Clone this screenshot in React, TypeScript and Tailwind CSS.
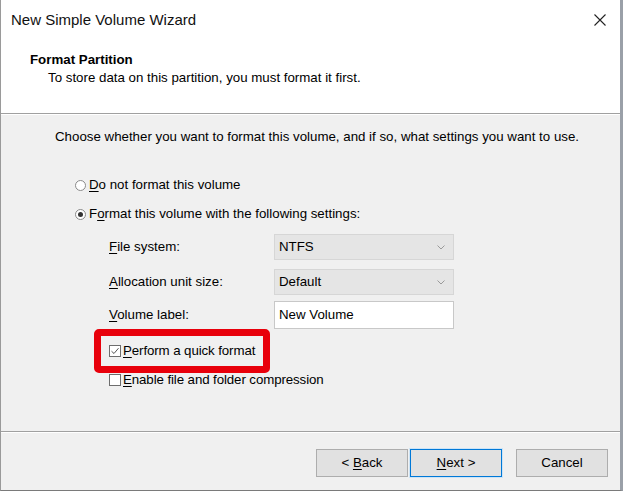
import React from "react";

const font = { fontFamily: '"Liberation Sans", Arial, sans-serif' };

function U({ children }: { children: React.ReactNode }) {
  return <span className="underline underline-offset-2">{children}</span>;
}

function Radio({ checked }: { checked?: boolean }) {
  return (
    <span className="w-[11px] h-[11px] rounded-full border border-[#8a8a8a] bg-white flex items-center justify-center shrink-0">
      {checked && <span className="w-[5px] h-[5px] rounded-full bg-[#333]" />}
    </span>
  );
}

function Check({ checked }: { checked?: boolean }) {
  return (
    <span className="w-[12px] h-[12px] border border-[#6d6d6d] bg-white flex items-center justify-center shrink-0">
      {checked && (
        <svg width="10" height="10" viewBox="0 0 10 10">
          <path d="M1.5 5.2 L4 7.5 L8.5 2.2" fill="none" stroke="#555" strokeWidth="1" />
        </svg>
      )}
    </span>
  );
}

function Select({ value }: { value: string }) {
  return (
    <div className="w-[180px] h-[26px] bg-[#e5e5e5] border border-[#d6d6d6] flex items-center justify-between pl-[4px] pr-[8px]">
      <span>{value}</span>
      <svg width="8" height="5" viewBox="0 0 8 5">
        <path d="M0.5 0.5 L4 4 L7.5 0.5" fill="none" stroke="#9a9a9a" strokeWidth="1" />
      </svg>
    </div>
  );
}

function Button({ children, primary }: { children: React.ReactNode; primary?: boolean }) {
  return (
    <div
      className={
        "h-[28px] w-[92px] flex items-center justify-center bg-[#e1e1e1] border " +
        (primary ? "border-[#0078d7] ring-1 ring-[#cce4f7]" : "border-[#adadad]")
      }
    >
      <span>{children}</span>
    </div>
  );
}

export default function App() {
  return (
    <div
      style={font}
      className="relative w-[623px] h-[491px] bg-[#f0f0f0] text-[13.3px] leading-[16px] text-black flex flex-col border-l border-r-[3px] border-b border-l-[#9a9a9a] border-r-[#9aa0a8] border-b-[#7a7a7a] overflow-hidden"
    >
      {/* white header */}
      <div className="bg-white h-[113px] flex flex-col">
        <div className="h-[40px] flex items-center justify-between pl-[10px] pr-[14px]">
          <span className="text-[15px] text-[#111]">New Simple Volume Wizard</span>
          <svg width="12" height="12" viewBox="0 0 12 12">
            <path d="M0.5 0.5 L11.5 11.5 M11.5 0.5 L0.5 11.5" stroke="#222" strokeWidth="1.1" />
          </svg>
        </div>
        <div className="pl-[29px] pt-[12px] font-bold">Format Partition</div>
        <div className="pl-[47px] pt-[2px]">To store data on this partition, you must format it first.</div>
      </div>
      <div className="h-px bg-[#a0a0a0]" />
      <div className="h-px bg-white" />

      {/* body */}
      <div className="flex-1 flex flex-col pl-[54px] pt-[14px]">
        <div>Choose whether you want to format this volume, and if so, what settings you want to use.</div>

        <div className="flex items-center gap-[3px] pl-[20px] mt-[32px]">
          <Radio />
          <span>
            <U>D</U>o not format this volume
          </span>
        </div>
        <div className="flex items-center gap-[3px] pl-[20px] mt-[13px]">
          <Radio checked />
          <span>
            F<U>o</U>rmat this volume with the following settings:
          </span>
        </div>

        <div className="flex flex-col pl-[54px] mt-[12px]">
          <div className="flex items-center">
            <span className="w-[165px]">
              <U>F</U>ile system:
            </span>
            <Select value="NTFS" />
          </div>
          <div className="flex items-center mt-[9px]">
            <span className="w-[165px]">
              <U>A</U>llocation unit size:
            </span>
            <Select value="Default" />
          </div>
          <div className="flex items-center mt-[6px]">
            <span className="w-[165px]">
              <U>V</U>olume label:
            </span>
            <div className="w-[180px] h-[28px] bg-white border border-[#c8c8c8] flex items-center pl-[4px]">New Volume</div>
          </div>
        </div>

        <div className="flex items-center gap-[2px] pl-[54px] mt-[14px] tracking-[-0.1px]">
          <Check checked />
          <span>
            <U>P</U>erform a quick format
          </span>
        </div>
        <div className="flex items-center gap-[2px] pl-[54px] mt-[13px] tracking-[-0.1px]">
          <Check />
          <span>
            <U>E</U>nable file and folder compression
          </span>
        </div>
      </div>

      <div className="h-px bg-[#a0a0a0]" />
      <div className="h-px bg-white" />
      <div className="h-[57px] flex items-start pl-[315px] pt-[16px]">
        <Button>
          {"< "}
          <U>B</U>ack
        </Button>
        <div className="ml-[2px]">
          <Button primary>
            <U>N</U>
            {"ext >"}
          </Button>
        </div>
        <div className="ml-[14px]">
          <Button>Cancel</Button>
        </div>
      </div>

      {/* red highlight annotation */}
      <div className="absolute left-[93px] top-[329px] w-[176px] h-[44px] border-[7px] border-[#e8000b] rounded-[5px]" />
    </div>
  );
}
